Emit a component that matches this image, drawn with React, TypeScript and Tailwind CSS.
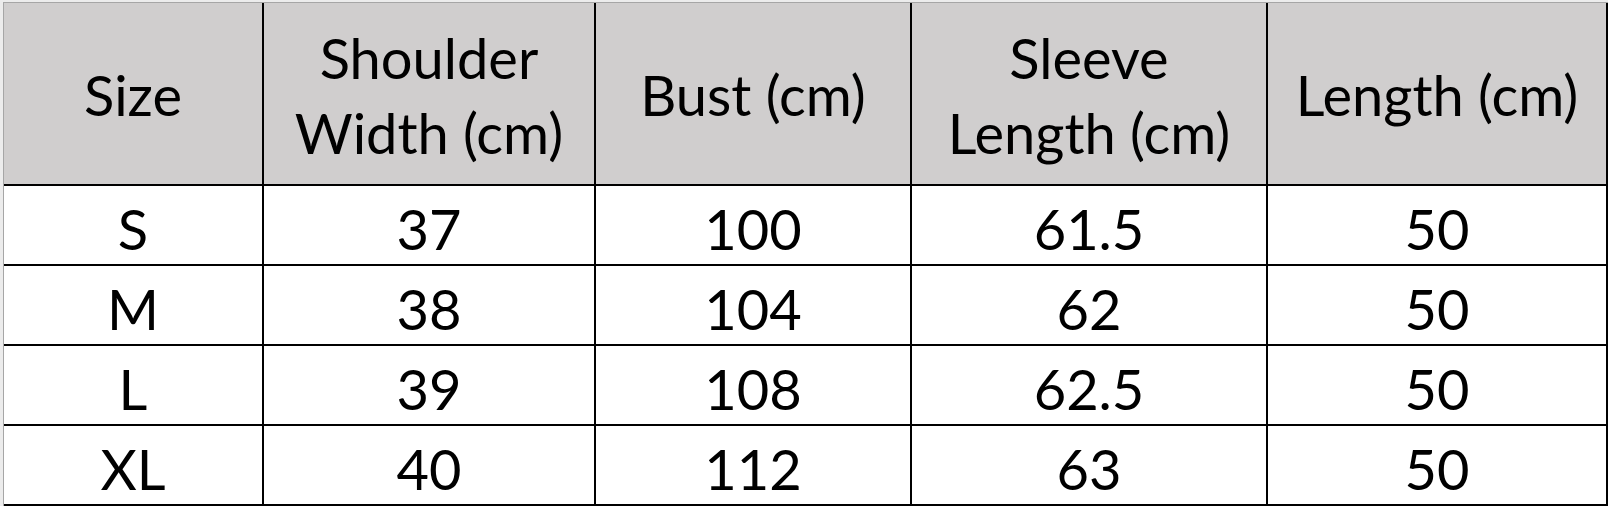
const headers: string[][] = [
  ['Size'],
  ['Shoulder', 'Width (cm)'],
  ['Bust (cm)'],
  ['Sleeve', 'Length (cm)'],
  ['Length (cm)'],
]

const rows = [
  ['S', '37', '100', '61.5', '50'],
  ['M', '38', '104', '62', '50'],
  ['L', '39', '108', '62.5', '50'],
  ['XL', '40', '112', '63', '50'],
]

export default function App() {
  return (
    <div className="w-[1611px] h-[510px] bg-white overflow-hidden">
      <div className="pl-[3px] pt-[2px] bg-[#ececec] w-fit">
        <div
          className="grid grid-cols-[260px_332px_316px_356px_340px] border-l border-t border-[#a6a6a6] bg-white text-black"
          style={{ fontFamily: 'Lato, "Open Sans", sans-serif' }}
        >
          {headers.map((lines, i) => (
            <div
              key={i}
              className="h-[183px] bg-[#d0cece] border-r-2 border-b-2 border-black flex flex-col items-center justify-center text-[56px] leading-[75px] pt-[2px]"
            >
              {lines.map((l) => (
                <span key={l}>{l}</span>
              ))}
            </div>
          ))}
          {rows.map((row, r) =>
            row.map((cell, c) => (
              <div
                key={`${r}-${c}`}
                className="h-[80px] border-r-2 border-b-2 border-black flex items-center justify-center text-[56px] leading-none pt-[8px]"
              >
                {cell}
              </div>
            ))
          )}
        </div>
      </div>
    </div>
  )
}
